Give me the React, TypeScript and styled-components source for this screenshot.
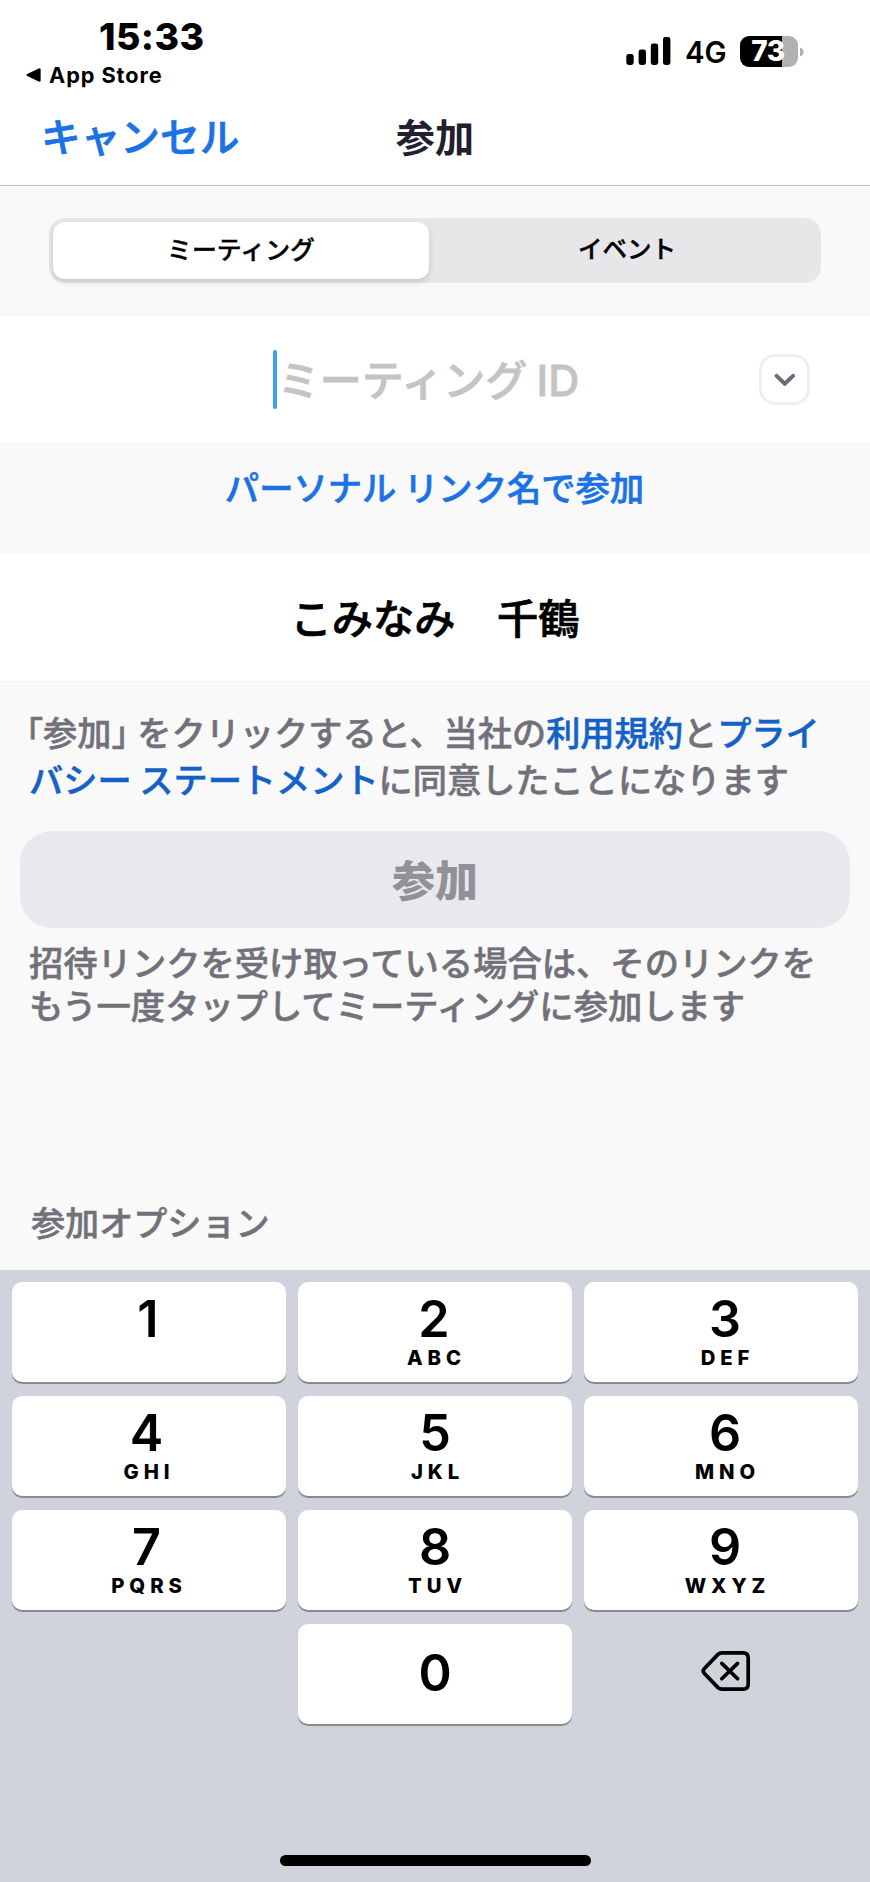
import React from 'react';
import styled, { createGlobalStyle } from 'styled-components';

const GlobalStyle = createGlobalStyle`
  * { box-sizing: border-box; }
  html, body { margin: 0; padding: 0; }
  body { background: #f9f9f9; }
  button { border: 0; padding: 0; margin: 0; background: none; font: inherit; color: inherit; }
`;

const jp = `"Noto Sans CJK JP", sans-serif`;
const latin = `Inter, "Noto Sans CJK JP", sans-serif`;

const Screen = styled.div`
  display: flex;
  flex-direction: column;
  width: 870px;
  height: 1882px;
  overflow: hidden;
  background: #f9f9f9;
  font-family: ${jp};
  color: #000;
`;

const Header = styled.header`
  display: flex;
  flex-direction: column;
  height: 186px;
  background: #fff;
  border-bottom: 1px solid #bfbfc1;
`;

const StatusBar = styled.div`
  display: flex;
  justify-content: space-between;
  height: 92px;
  padding: 0 66px 0 26px;
  font-family: ${latin};
`;

const StatusLeft = styled.div`
  display: flex;
  flex-direction: column;
`;

const Clock = styled.div`
  margin: 15px 0 0 73px;
  font-size: 37.5px;
  line-height: 44px;
  font-weight: 780;
  letter-spacing: 0.4px;
`;

const BackToApp = styled.div`
  display: flex;
  align-items: center;
  gap: 8px;
  margin-top: 2px;
  font-size: 21.7px;
  line-height: 28px;
  font-weight: 660;
  letter-spacing: 0.95px;
`;

const StatusRight = styled.div`
  display: flex;
  align-items: flex-start;
  padding-top: 36px;
`;

const Network = styled.span`
  margin: 2px 0 0 14px;
  width: 55px;
  font-size: 29.4px;
  line-height: 30px;
  font-weight: 600;
`;

const Battery = styled.div`
  display: flex;
  align-items: center;
  gap: 2px;
`;

const BatteryBody = styled.div`
  width: 58px;
  height: 31px;
  border-radius: 9px;
  background: linear-gradient(90deg, #000 73%, #b1b1b1 73%);
  color: #fff;
  font-size: 28px;
  line-height: 31px;
  font-weight: 800;
  letter-spacing: -0.5px;
  text-indent: -2px;
  text-align: center;
`;

const NavBar = styled.div`
  display: grid;
  grid-template-columns: 1fr auto 1fr;
  align-items: center;
  height: 86px;
  padding: 0 41px;
`;

const CancelButton = styled.button`
  justify-self: start;
  font-size: 39.7px;
  line-height: 48px;
  font-weight: 500;
  color: #1a72e6;
  -webkit-text-stroke: 0.7px currentColor;
`;

const Title = styled.h1`
  margin: 0;
  font-size: 39.2px;
  line-height: 48px;
  font-weight: 700;
  color: #21202e;
`;

const Segmented = styled.div`
  display: flex;
  flex: none;
  height: 65px;
  margin: 32px 49px 33px;
  padding: 4px;
  border-radius: 16px;
  background: #e7e7e9;
`;

const Segment = styled.button<{ $active?: boolean }>`
  flex: ${(p) => (p.$active ? '0 0 376px' : '1')};
  height: 57px;
  padding-left: ${(p) => (p.$active ? '0' : '8px')};
  border-radius: 12px;
  background: ${(p) => (p.$active ? '#fff' : 'transparent')};
  box-shadow: ${(p) => (p.$active ? '0 3px 6px rgba(0,0,0,.14)' : 'none')};
  font-size: ${(p) => (p.$active ? '24.9px' : '24.5px')};
  line-height: 48px;
  padding-bottom: 5px;
  font-weight: 500;
  -webkit-text-stroke: 0.4px currentColor;
`;

const Field = styled.div`
  display: grid;
  grid-template-columns: 1fr auto 1fr;
  align-items: center;
  flex: none;
  height: 127px;
  padding: 0 60px;
  background: #fff;
  box-shadow: 0 0 0 1px #f4f4f5;
`;

const Placeholder = styled.div`
  display: flex;
  align-items: center;
  grid-column: 2;
  gap: 1px;
  margin-right: 18px;
  font-size: 42px;
  line-height: 58px;
  font-weight: 500;
  color: #c4c4c6;
  white-space: pre;
  -webkit-text-stroke: 0.8px currentColor;
`;

const PlaceholderText = styled.span`
  padding-bottom: 2px;
`;

const Caret = styled.span`
  width: 4px;
  height: 59px;
  border-radius: 2px;
  background: #3a9ff5;
`;

const LatinText = styled.span`
  font-family: ${latin};
  font-size: 43px;
`;

const DropButton = styled.button`
  display: flex;
  align-items: center;
  justify-content: center;
  justify-self: end;
  width: 51px;
  height: 51px;
  border: 3px solid #efeef4;
  border-radius: 16px;
`;

const LinkRow = styled.div`
  display: flex;
  justify-content: center;
  flex: none;
  height: 111px;
  padding: 19px 1px 0 0;
`;

const PersonalLink = styled.a`
  font-size: 34.3px;
  line-height: 48px;
  font-weight: 500;
  color: #1a72e6;
  -webkit-text-stroke: 0.6px currentColor;
`;

const NameField = styled(Field)`
  display: flex;
  justify-content: center;
  padding-bottom: 4px;
  font-size: 41.3px;
  line-height: 60px;
  font-weight: 500;
  -webkit-text-stroke: 0.7px currentColor;
`;

const Paragraph = styled.p<{ $line: number }>`
  flex: none;
  margin: 0;
  padding-left: 29px;
  font-size: 34.3px;
  line-height: ${(p) => p.$line}px;
  font-weight: 500;
  color: #72717a;
  white-space: nowrap;
  -webkit-text-stroke: 0.5px currentColor;
`;

const Terms = styled(Paragraph)`
  height: 122px;
  margin-top: 27px;
  margin-bottom: 1px;
  font-size: 34.2px;
`;

const Bracket = styled.span<{ $outdent?: boolean }>`
  margin-left: ${(p) => (p.$outdent ? '-3px' : '0')};
  margin-right: ${(p) => (p.$outdent ? '0' : '1px')};
  font-feature-settings: 'halt';
`;

const PolicyLink = styled.a`
  color: #1461c8;
`;

const JoinButton = styled.button`
  flex: none;
  height: 97px;
  margin: 0 20px;
  border-radius: 32px;
  background: #e9e8ee;
  color: #929197;
  font-size: 43px;
  line-height: 91px;
  padding-bottom: 3px;
  font-weight: 900;
`;

const Hint = styled(Paragraph)`
  margin-top: 12px;
`;

const Options = styled(Paragraph)`
  margin-top: auto;
  padding: 0 0 27px 31px;
  font-size: 34.1px;
`;

const Keyboard = styled.div`
  display: flex;
  flex-direction: column;
  justify-content: space-between;
  flex: none;
  height: 612px;
  padding: 12px 12px 16px;
  background: #d0d3db;
  font-family: ${latin};
`;

const KeyGrid = styled.div`
  display: grid;
  grid-template-columns: repeat(3, 274px);
  grid-auto-rows: 100px;
  gap: 14px 12px;
`;

const Key = styled.button<{ $shift?: number; $column?: number }>`
  display: flex;
  flex-direction: column;
  align-items: center;
  grid-column: ${(p) => p.$column ?? 'auto'};
  padding-top: 12px;
  padding-left: ${(p) => Math.max(0, (p.$shift ?? 0) * 2)}px;
  padding-right: ${(p) => Math.max(0, -(p.$shift ?? 0) * 2)}px;
  border-radius: 10px;
  background: #fff;
  box-shadow: 0 2px 0 #898a8d;
`;

const Digit = styled.span<{ $alone?: boolean }>`
  margin-top: ${(p) => (p.$alone ? '12px' : '0')};
  font-size: 50.3px;
  line-height: 50px;
  font-weight: 560;
`;

const Letters = styled.span`
  margin: 2px 0 0 5px;
  font-size: 20.3px;
  line-height: 24px;
  font-weight: 850;
  letter-spacing: 4.9px;
`;

const DeleteKey = styled.button`
  display: flex;
  align-items: center;
  justify-content: center;
  padding: 0 0 6px 9px;
`;

const HomeIndicator = styled.div`
  align-self: center;
  width: 311px;
  height: 11px;
  border-radius: 6px;
  background: #000;
`;

const keys: { digit: string; letters?: string; shift: number }[] = [
  { digit: '1', shift: -1 },
  { digit: '2', letters: 'ABC', shift: -1 },
  { digit: '3', letters: 'DEF', shift: 4 },
  { digit: '4', letters: 'GHI', shift: -2.5 },
  { digit: '5', letters: 'JKL', shift: 0 },
  { digit: '6', letters: 'MNO', shift: 4 },
  { digit: '7', letters: 'PQRS', shift: -2.5 },
  { digit: '8', letters: 'TUV', shift: 0 },
  { digit: '9', letters: 'WXYZ', shift: 4 },
];

const Signal = () => (
  <svg width="45" height="30" viewBox="0 0 45 30">
    <rect x="0.3" y="18" width="7.4" height="11" rx="2.4" />
    <rect x="12.6" y="13.5" width="7.4" height="15.5" rx="2.4" />
    <rect x="24.8" y="7.5" width="7.4" height="21.5" rx="2.4" />
    <rect x="37" y="1" width="7.4" height="28" rx="2.4" />
  </svg>
);

const BackTriangle = () => (
  <svg width="15" height="14" viewBox="0 0 15 14">
    <path d="M1.2 6.1 12.7.4Q14.6-.2 14.6 1.6V12.4Q14.6 14.2 12.7 13.6L1.2 7.9Q-.4 7 1.2 6.1Z" />
  </svg>
);

const BatteryNub = () => (
  <svg width="4" height="10" viewBox="0 0 4 10">
    <path d="M0 .5Q3.6 2 3.6 5T0 9.5Z" fill="#b1b1b1" />
  </svg>
);

const Chevron = () => (
  <svg width="22" height="14" viewBox="0 0 22 14" fill="none">
    <path d="M2.6 2.9 10.8 10.8 19 2.9" stroke="#6d6c7c" strokeWidth="4" strokeLinecap="round" strokeLinejoin="round" />
  </svg>
);

const DeleteIcon = () => (
  <svg width="50" height="42" viewBox="0 0 50 42" fill="none" stroke="#000" strokeLinecap="round" strokeLinejoin="round">
    <path d="M21 2.8H42Q47.2 2.8 47.2 8V34Q47.2 39.2 42 39.2H21Q18.6 39.2 17 37.6L3.2 23.2Q1.2 21 3.2 18.8L17 4.4Q18.6 2.8 21 2.8Z" strokeWidth="3.7" />
    <path d="M20.8 13.4 36.6 28.8M36.6 13.4 20.8 28.8" strokeWidth="3.7" />
  </svg>
);

export default function App() {
  return (
    <Screen lang="ja">
      <GlobalStyle />
      <Header>
        <StatusBar>
          <StatusLeft>
            <Clock>15:33</Clock>
            <BackToApp>
              <BackTriangle />
              App Store
            </BackToApp>
          </StatusLeft>
          <StatusRight>
            <Signal />
            <Network>4G</Network>
            <Battery>
              <BatteryBody>73</BatteryBody>
              <BatteryNub />
            </Battery>
          </StatusRight>
        </StatusBar>
        <NavBar>
          <CancelButton>キャンセル</CancelButton>
          <Title>参加</Title>
        </NavBar>
      </Header>

      <Segmented>
        <Segment $active>ミーティング</Segment>
        <Segment>イベント</Segment>
      </Segmented>

      <Field>
        <Placeholder>
          <Caret />
          <PlaceholderText>
            ミーティング <LatinText>ID</LatinText>
          </PlaceholderText>
        </Placeholder>
        <DropButton aria-label="履歴">
          <Chevron />
        </DropButton>
      </Field>

      <LinkRow>
        <PersonalLink>パーソナル リンク名で参加</PersonalLink>
      </LinkRow>

      <NameField>こみなみ　千鶴</NameField>

      <Terms $line={46.5}>
        <Bracket $outdent>「</Bracket>参加<Bracket>」</Bracket> をクリックすると、当社の
        <PolicyLink>利用規約</PolicyLink>と<PolicyLink>プライ</PolicyLink>
        <br />
        <PolicyLink>バシー ステートメント</PolicyLink>に同意したことになります
      </Terms>

      <JoinButton>参加</JoinButton>

      <Hint $line={43.3}>
        招待リンクを受け取っている場合は、そのリンクを
        <br />
        もう一度タップしてミーティングに参加します
      </Hint>

      <Options $line={44}>参加オプション</Options>

      <Keyboard>
        <KeyGrid>
          {keys.map((k) => (
            <Key key={k.digit} $shift={k.shift}>
              <Digit>{k.digit}</Digit>
              {k.letters && <Letters>{k.letters}</Letters>}
            </Key>
          ))}
          <Key $column={2}>
            <Digit $alone>0</Digit>
          </Key>
          <DeleteKey aria-label="削除">
            <DeleteIcon />
          </DeleteKey>
        </KeyGrid>
        <HomeIndicator />
      </Keyboard>
    </Screen>
  );
}
